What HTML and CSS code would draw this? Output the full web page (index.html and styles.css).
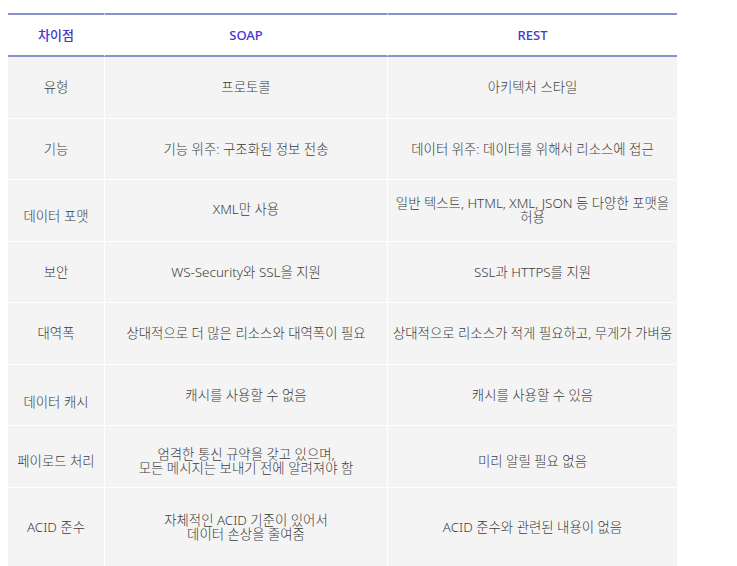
FILE: index.html
```html
<!DOCTYPE html>
<html lang="ko">
<head>
<meta charset="utf-8">
<link rel="stylesheet" href="styles.css">
</head>
<body>
<table class="cmp">
  <colgroup>
    <col class="c1"><col class="c2"><col class="c3">
  </colgroup>
  <thead>
    <tr><th>차이점</th><th>SOAP</th><th>REST</th></tr>
  </thead>
  <tbody>
    <tr><td>유형</td><td>프로토콜</td><td>아키텍처 스타일</td></tr>
    <tr><td>기능</td><td>기능 위주: 구조화된 정보 전송</td><td>데이터 위주: 데이터를 위해서 리소스에 접근</td></tr>
    <tr><td class="down">데이터 포맷</td><td class="up">XML만 사용</td><td>일반 텍스트, HTML, XML, JSON 등 다양한 포맷을<br>허용</td></tr>
    <tr><td>보안</td><td>WS-Security와 SSL을 지원</td><td>SSL과 HTTPS를 지원</td></tr>
    <tr><td>대역폭</td><td>상대적으로 더 많은 리소스와 대역폭이 필요</td><td>상대적으로 리소스가 적게 필요하고, 무게가 가벼움</td></tr>
    <tr><td class="down2">데이터 캐시</td><td>캐시를 사용할 수 없음</td><td>캐시를 사용할 수 있음</td></tr>
    <tr class="low"><td>페이로드 처리</td><td>엄격한 통신 규약을 갖고 있으며,<br>모든 메시지는 보내기 전에 알려져야 함</td><td>미리 알릴 필요 없음</td></tr>
    <tr class="last"><td>ACID 준수</td><td>자체적인 ACID 기준이 있어서<br>데이터 손상을 줄여줌</td><td>ACID 준수와 관련된 내용이 없음</td></tr>
  </tbody>
</table>
</body>
</html>
```

FILE: styles.css
```css
html, body {
  margin: 0;
  padding: 0;
  background: #ffffff;
}
body {
  padding: 13px 0 0 8px;
  font-family: "Noto Sans", "Noto Sans CJK KR", sans-serif;
  font-size: 13.4px;
  color: #3c3c3c;
}
.cmp {
  border-collapse: separate;
  border-spacing: 0;
  table-layout: fixed;
  width: 669px;
}
.c1 { width: 97px; }
.c2 { width: 283px; }
.c3 { width: 289px; }
.cmp th, .cmp td {
  text-align: center;
  vertical-align: middle;
  padding: 0 1px;
  line-height: 14px;
  box-sizing: border-box;
}
.cmp th {
  height: 44px;
  border-top: 2px solid #8a8fd0;
  border-bottom: 2px solid #8a8fd0;
  border-right: 1px solid #ffffff;
  color: #4636d2;
  font-size: 13px;
  font-weight: 500;
  background: #ffffff;
}
.cmp th:last-child { border-right: 0; }
.cmp td {
  height: 61.5px;
  font-weight: 300;
  background: #f4f4f4;
  border-right: 1px solid #ffffff;
  border-bottom: 1px solid #ffffff;
}
.cmp td:last-child { border-right: 0; }
.cmp td.down { padding-top: 11px; }
.cmp td.up { padding-bottom: 3px; }
.cmp td.down2 { padding-top: 14px; }
.cmp tr.low td { padding-top: 10px; }
.cmp tr.last td { height: 80px; }
```
